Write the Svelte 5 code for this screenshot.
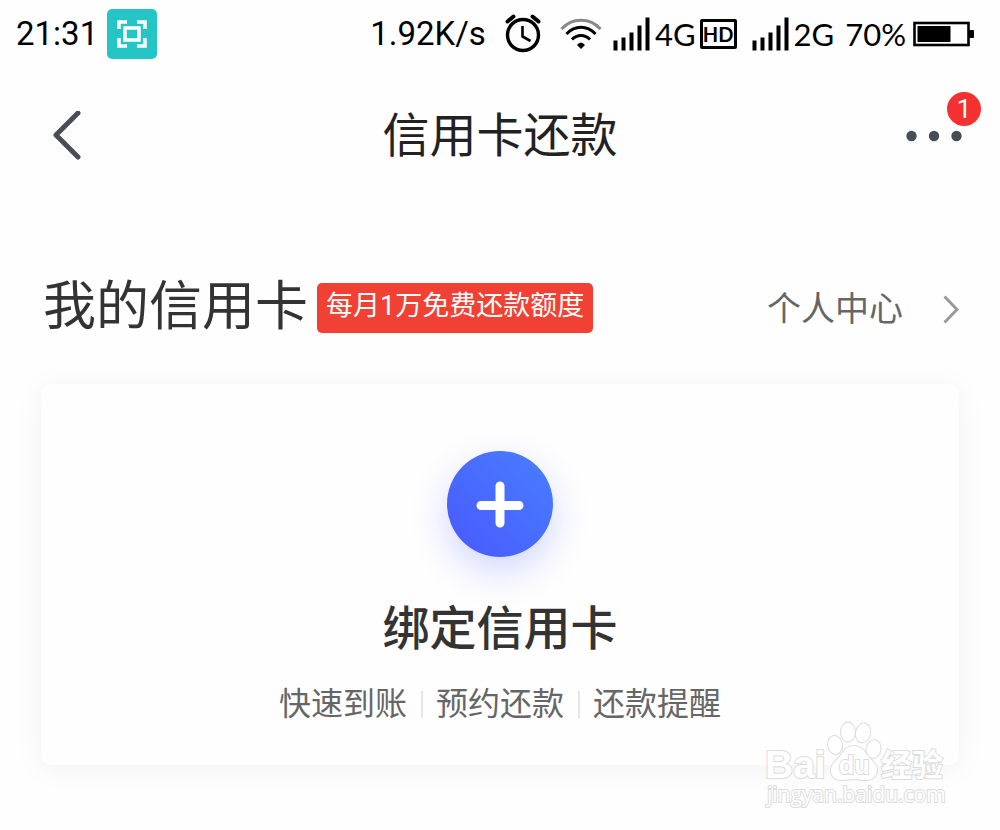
<script lang="ts">
	const features = ['快速到账', '预约还款', '还款提醒'];
	const bars = [10, 13, 18, 25, 33];

	let unread = $state(1);
</script>

{#snippet signal()}
	<svg class="signal" width="38" height="34" viewBox="0 0 38 34" aria-hidden="true">
		{#each bars as h, i}
			<rect x={i * 8 + 0.5} y={33.5 - h} width="4" height={h} />
		{/each}
	</svg>
{/snippet}

<div class="page">
	<div class="status">
		<div class="status-left">
			<time>21:31</time>
			<svg width="50" height="50" viewBox="0 0 50 50" aria-hidden="true">
				<rect width="50" height="50" rx="5" fill="#25c5c5" />
				<g fill="none" stroke="#fff">
					<path d="M12 20V13H20M30 13H38V20M38 29V37H30M20 37H12V29" stroke-width="3.5" />
					<rect x="18" y="19" width="14" height="12" stroke-width="3.5" />
				</g>
			</svg>
		</div>

		<div class="status-right">
			<span>1.92K/s</span>
			<svg width="52" height="40" viewBox="0 0 52 40" fill="none" stroke="#000" aria-hidden="true">
				<circle cx="26" cy="21" r="15.5" stroke-width="3.4" />
				<path d="M10.5 7.5l6-5M41.5 7.5l-6-5" stroke-width="4" stroke-linecap="round" />
				<path d="M25.5 12v10.5l8 4.5" stroke-width="2.6" />
			</svg>
			<svg width="42" height="34" viewBox="0 0 42 34" fill="none" stroke="#000" stroke-width="3" aria-hidden="true">
				<path d="M1.5 12C12 .2 30 .2 40.5 12" stroke="#888" />
				<path d="M6.5 17C15 8 27 8 35.5 17" />
				<path d="M12 22.5C17 17 25 17 30 22.5" />
				<path d="M17 28q4-5 8 0l-4 4z" fill="#000" stroke="none" />
			</svg>
			<div class="network">
				{@render signal()}
				<span>4G</span>
				<span class="hd">HD</span>
			</div>
			<div class="network second">
				{@render signal()}
				<span>2G</span>
			</div>
			<div class="battery">
				<span>70%</span>
				<svg width="62" height="26" viewBox="0 0 62 26" aria-hidden="true">
					<rect x="1.5" y="2" width="54" height="22" fill="none" stroke="#000" stroke-width="2.6" />
					<rect x="4.5" y="5" width="33" height="16" />
					<rect x="56" y="9" width="5" height="8" rx="1" />
				</svg>
			</div>
		</div>
	</div>

	<header class="nav">
		<button class="back" type="button" aria-label="返回">
			<svg width="30" height="50" viewBox="0 0 30 50" aria-hidden="true">
				<path d="M26 2L4 24l22 22" />
			</svg>
		</button>
		<h1>信用卡还款</h1>
		<button class="more" type="button" aria-label="更多">
			<svg width="56" height="12" viewBox="0 0 56 12" fill="#474c57" aria-hidden="true">
				<circle cx="5.5" cy="6" r="5.2" />
				<circle cx="28" cy="6" r="5.2" />
				<circle cx="50.5" cy="6" r="5.2" />
			</svg>
			{#if unread}
				<span class="badge">{unread}</span>
			{/if}
		</button>
	</header>

	<main>
		<div class="section-head">
			<h2>我的信用卡</h2>
			<span class="tag">每月1万免费还款额度</span>
			<a href="#profile">
				个人中心
				<svg width="16" height="30" viewBox="0 0 16 30" aria-hidden="true">
					<path d="M1.5 2.5L14 15.5 1.5 28.5" />
				</svg>
			</a>
		</div>

		<section class="card">
			<button class="bind" type="button">
				<span class="plus">
					<svg width="48" height="48" viewBox="0 0 48 48" aria-hidden="true">
						<path d="M24 6v37M5 25.500h38" stroke="#fff" stroke-width="9" stroke-linecap="round" />
					</svg>
				</span>
				<span class="bind-title">绑定信用卡</span>
			</button>
			<ul>
				{#each features as feature}
					<li>{feature}</li>
				{/each}
			</ul>
		</section>
	</main>

	<svg class="watermark" width="190" height="92" viewBox="0 0 190 92" aria-hidden="true">
		<text x="3" y="58" font-size="39" font-weight="bold">Bai</text>
		<ellipse cx="73" cy="25" rx="7" ry="9" transform="rotate(-8 73 25)" />
		<ellipse cx="86" cy="12" rx="7" ry="9.5" />
		<ellipse cx="101" cy="13" rx="7" ry="9.5" transform="rotate(12 101 13)" />
		<ellipse cx="111.500" cy="29" rx="7" ry="9" transform="rotate(10 111 29)" />
		<path
			d="M92 26c8 0 11 6 14 10 4 5 9 8 9 14 0 7-5 10-11 10-5 0-8-1-12-1s-8 1-12 1c-6 0-11-3-11-10 0-6 5-9 9-14 3-4 6-10 14-10z"
		/>
		<text x="77" y="54" font-size="25" font-weight="bold">du</text>
		<text x="119" y="56" font-size="31" font-weight="bold">经验</text>
		<text class="site" x="5" y="82" font-size="21">jingyan.baidu.com</text>
	</svg>
</div>

<style>
	:global(body) {
		margin: 0;
		background: #fefefe;
	}

	.page {
		position: relative;
		padding-bottom: 65px;
		font-family: Roboto, 'Noto Sans CJK SC', sans-serif;
		color: #333;
	}

	button {
		padding: 0;
		border: 0;
		background: none;
		font: inherit;
		color: inherit;
		cursor: pointer;
	}

	svg {
		display: block;
		flex-shrink: 0;
	}

	.status {
		display: flex;
		justify-content: space-between;
		height: 68px;
		padding: 0 25px 0 16px;
		font-size: 33px;
		line-height: 40px;
		color: #000;
	}

	.status-left,
	.status-right,
	.network,
	.battery {
		display: flex;
		align-items: center;
	}

	.status-left {
		gap: 9px;
	}

	.status-right {
		gap: 11px;
	}

	.network {
		gap: 4px;
		font-family: Lato, sans-serif;
		font-size: 31px;
	}

	.second {
		margin-left: 4px;
	}

	.hd {
		box-sizing: border-box;
		width: 37px;
		height: 30px;
		border: 3px solid #000;
		border-radius: 2px;
		font-size: 20px;
		font-weight: bold;
		line-height: 24px;
		text-align: center;
	}

	.battery {
		gap: 7px;
		font-family: Lato, sans-serif;
		font-size: 31px;
	}

	.nav {
		display: grid;
		grid-template-columns: 1fr auto 1fr;
		align-items: center;
		height: 136px;
		padding: 0 38px;
	}

	.nav path {
		fill: none;
		stroke: #474c57;
		stroke-width: 5;
		stroke-linecap: round;
		stroke-linejoin: round;
	}

	.back {
		justify-self: start;
		padding: 0 14px;
	}

	h1,
	h2 {
		margin: 0;
		font-weight: normal;
	}

	h1 {
		font-size: 47px;
		line-height: 64px;
		color: #222;
	}

	.more {
		position: relative;
		justify-self: end;
		padding: 16px 0;
	}

	.badge {
		position: absolute;
		top: -22px;
		right: -19px;
		width: 34px;
		height: 34px;
		border-radius: 50%;
		background: #f43030;
		font-size: 26px;
		line-height: 34px;
		text-align: center;
		color: #fff;
	}

	main {
		padding: 77px 41px 0;
	}

	.section-head {
		display: flex;
		align-items: flex-end;
		padding-left: 2px;
	}

	h2 {
		font-size: 53px;
		line-height: 52px;
	}

	.tag {
		margin-left: 9px;
		padding: 0 9px 4px;
		border-radius: 5px;
		background: #f04134;
		font-size: 27px;
		line-height: 46px;
		color: #fff;
	}

	.section-head a {
		display: flex;
		align-items: center;
		gap: 40px;
		margin-left: auto;
		font-size: 34px;
		line-height: 48px;
		text-decoration: none;
		color: #666;
	}

	.section-head path {
		fill: none;
		stroke: #999;
		stroke-width: 3;
	}

	.card {
		margin-top: 51px;
		padding: 67px 0 39px;
		border-radius: 10px;
		background: #fefefe;
		box-shadow: 0 4px 30px rgba(0, 0, 0, 0.05);
	}

	.bind {
		display: flex;
		flex-direction: column;
		align-items: center;
		gap: 40px;
		margin: 0 auto;
	}

	.plus {
		display: grid;
		place-items: center;
		width: 106px;
		height: 106px;
		border-radius: 50%;
		background: linear-gradient(45deg, #4958ff, #487fff);
		box-shadow: 0 14px 36px rgba(73, 88, 255, 0.24);
	}

	.bind-title {
		font-size: 47px;
		font-weight: 500;
		line-height: 64px;
	}

	ul {
		display: flex;
		justify-content: center;
		align-items: center;
		margin: 21px 0 0;
		padding: 0;
		list-style: none;
		font-size: 32px;
		line-height: 44px;
		color: #666;
	}

	li {
		display: flex;
		align-items: center;
	}

	li + li::before {
		content: '';
		width: 2px;
		height: 27px;
		margin: 0 13px 0 14px;
		background: #e5e5e5;
	}

	/* site mark lies over the card's corner */
	.watermark {
		position: absolute;
		right: 48px;
		bottom: 18px;
		fill: #fff;
		stroke: #dcdcdc;
		stroke-width: 2;
		paint-order: stroke;
		font-family: 'Liberation Sans', 'Noto Sans CJK SC', sans-serif;
	}

	.site {
		font-family: 'Open Sans', sans-serif;
	}
</style>
